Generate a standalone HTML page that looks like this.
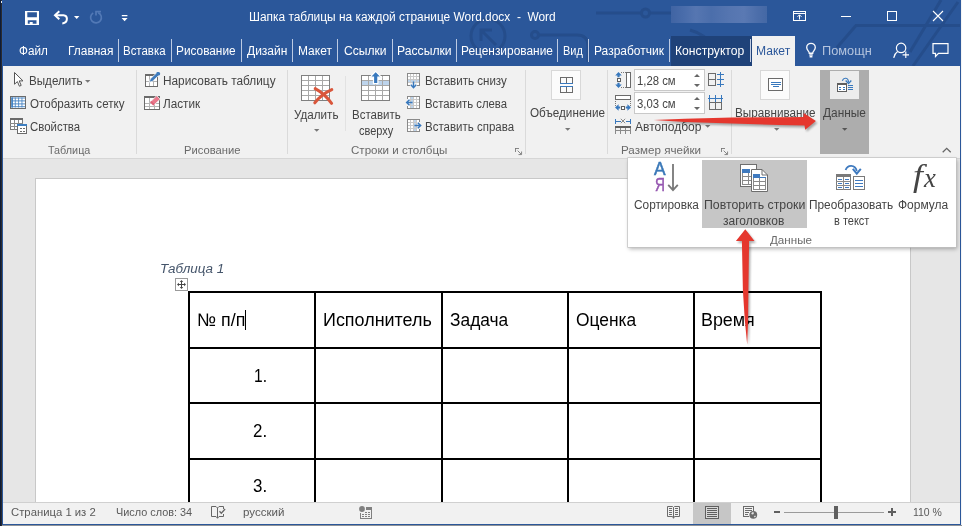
<!DOCTYPE html>
<html lang="ru"><head><meta charset="utf-8"><title>Word</title>
<style>
html,body{margin:0;padding:0}
body{width:962px;height:526px;position:relative;overflow:hidden;background:#2b579a;font-family:"Liberation Sans",sans-serif}
.a{position:absolute}
.t{position:absolute;white-space:pre;transform-origin:0 0;display:block}
svg{position:absolute;overflow:visible}
.sep{position:absolute;width:1px;background:#dadada}
.tsep{position:absolute;width:1px;background:#bccae3;top:39px;height:23px}
#texts{position:absolute;left:0;top:0;width:962px;height:526px;will-change:transform}

</style></head>
<body>
<!-- title / tab strip -->
<div class="a" style="left:0;top:0;width:962px;height:66px;background:#2b579a"></div>
<!-- decorative background pattern -->
<svg style="left:0;top:0" width="962" height="66" viewBox="0 0 962 66" fill="none" stroke="#254d8b" stroke-width="3">
<path d="M962 25.500H856L837 47.500"/><path d="M941 0L910 52"/><path d="M958 2L913 66"/>
<circle cx="488" cy="36" r="17"/><path d="M496 45L481 30M481 41V30H492"/>
<path d="M539 35H577Q588 35 588 46V62"/><circle cx="535" cy="35" r="3.500"/>
<path d="M596 13H641M650 13H672"/><circle cx="645.500" cy="13" r="4"/>
<path d="M690 30Q705 34 716 48T740 66"/>
</svg>
<!-- contextual tab darker bg -->
<div class="a" style="left:670.800px;top:36px;width:81.500px;height:30px;background:#1f4279"></div>
<!-- active tab -->
<div class="a" style="left:752.300px;top:36.300px;width:42.900px;height:30px;background:#f1f1f1"></div>
<!-- blurred user name -->
<div class="a" style="left:671px;top:6px;width:96px;height:17px;background:linear-gradient(90deg,#4064a3 0%,#4a6dab 14%,#5676b1 26%,#4b6eab 42%,#5575b0 60%,#5a79b3 76%,#4c6eaa 90%,#4468a5 100%);filter:blur(0.6px)"></div>
<!-- tab separators -->
<div class="tsep" style="left:118px"></div><div class="tsep" style="left:171px"></div>
<div class="tsep" style="left:241px"></div><div class="tsep" style="left:292px"></div>
<div class="tsep" style="left:337px"></div><div class="tsep" style="left:392px"></div>
<div class="tsep" style="left:456px"></div><div class="tsep" style="left:557px"></div>
<div class="tsep" style="left:588px"></div><div class="tsep" style="left:669px"></div>
<div class="tsep" style="left:750px;width:1.300px;background:#c3cee4"></div>

<!-- QAT icons -->
<svg style="left:25px;top:11px" width="14" height="14" viewBox="0 0 14 14"><path fill="#fff" fill-rule="evenodd" d="M0 0h14v14H0zM2.3 1.3v4.9h9.6V1.3zM2.8 9.3v3.4h1.9v-1.7h3v1.7h3.8V9.3z"/></svg>
<svg style="left:53px;top:10px" width="16" height="15" viewBox="0 0 16 15" fill="none" stroke="#fff" stroke-width="2"><path d="M6.3 1.3L2 5.2l4.3 4"/><path d="M2.5 5.2H10.5a3.6 3.6 0 0 1 3.4 3.6c0 2.6-2 4.3-4.6 4.6"/></svg>
<svg style="left:74px;top:16px" width="6" height="3" viewBox="0 0 6 3"><path fill="#fff" d="M0 0h5.4L2.7 3z"/></svg>
<svg style="left:88px;top:10px" width="16" height="15" viewBox="0 0 16 15" fill="none" stroke="#5279b6" stroke-width="1.7"><path d="M10.2 2.6a5.4 5.4 0 1 1-5 .3"/><path d="M8 5.6V1.6h5"/></svg>
<svg style="left:121px;top:14px" width="8" height="8" viewBox="0 0 8 8"><path fill="#fff" d="M0.8 1h5.6v1.2H0.8zM0.6 4h6L3.6 7.2z"/></svg>

<!-- window controls -->
<svg style="left:792px;top:10px" width="16" height="12" viewBox="0 0 16 12" fill="none" stroke="#fff" stroke-width="1"><rect x="1.5" y="1.5" width="12" height="9"/><path d="M1.5 3.5h12M7.5 9.5v-4.5M5.5 6.8l2-2 2 2"/></svg>
<div class="a" style="left:841px;top:16px;width:10px;height:1px;background:#fff"></div>
<div class="a" style="left:887px;top:11px;width:8px;height:8px;border:1px solid #fff"></div>
<svg style="left:932px;top:10px" width="12" height="12" viewBox="0 0 12 12" stroke="#fff" stroke-width="1.1"><path d="M1 1l10 10M11 1L1 11"/></svg>

<!-- help bulb / share / comments -->
<svg style="left:806px;top:43px" width="11" height="15" viewBox="0 0 11 15" fill="none" stroke="#f6f8fc" stroke-width="1.35"><path d="M3.3 10.2c0-2-2.6-2.8-2.6-5.6a4.3 4.3 0 0 1 8.600 0c0 2.800-2.600 3.600-2.600 5.600z"/><path d="M3.300 12h3.400M3.600 13.700h2.800"/></svg>
<svg style="left:893px;top:42px" width="17" height="17" viewBox="0 0 17 17" fill="none" stroke="#fff" stroke-width="1.2"><circle cx="8.1" cy="5.9" r="4.7"/><path d="M4.6 9.6C2.6 11 1.2 13.200 0.700 15.800"/><path d="M9.600 12.900h6.400M12.800 9.600v6.400" stroke-width="1.1"/></svg>
<svg style="left:932px;top:43px" width="17" height="15" viewBox="0 0 17 15" fill="none" stroke="#fff" stroke-width="1.200"><path d="M1 0.700h15v9.600H6.500L3.500 13.500V10.300H1z"/></svg>

<!-- ribbon -->
<div class="a" style="left:2px;top:66px;width:958px;height:92px;background:#f1f1f1"></div>
<div class="a" style="left:2px;top:158px;width:958px;height:1px;background:#d6d6d6"></div>
<!-- document area -->
<div class="a" style="left:2px;top:159px;width:958px;height:344px;background:#e6e6e6"></div>
<div class="a" style="left:35px;top:178px;width:876px;height:325px;background:#fff;border:1px solid #c8c8c8;border-bottom:none;box-sizing:border-box"></div>
<!-- status bar -->
<div class="a" style="left:2px;top:502px;width:958px;height:22px;background:#f1f1f1;border-top:1px solid #d0d0d0;box-sizing:border-box"></div>
<div class="a" style="left:693px;top:503px;width:38px;height:21px;background:#c6c6c6"></div>
<!-- window frame -->
<div class="a" style="left:0;top:0;width:1px;height:526px;background:#0c1b38"></div><div class="a" style="left:1px;top:0;width:1px;height:526px;background:#2a2b2e"></div><div class="a" style="left:2px;top:0;width:1px;height:66px;background:#2a5aa6"></div><div class="a" style="left:1px;top:1px;width:1px;height:2px;background:#e8e8e8"></div>
<div class="a" style="left:2px;top:66px;width:1px;height:458px;background:#2b579a"></div>
<div class="a" style="left:960px;top:0;width:1px;height:526px;background:#2b579a"></div>
<div class="a" style="left:961px;top:0;width:1px;height:526px;background:#f4f4f4"></div>
<div class="a" style="left:2px;top:524px;width:959px;height:1px;background:#2b579a"></div>
<div class="a" style="left:2px;top:525px;width:960px;height:1px;background:#8f9297"></div>

<!-- ribbon separators -->
<div class="sep" style="left:136px;top:70px;height:84px"></div>
<div class="sep" style="left:287px;top:70px;height:84px"></div>
<div class="sep" style="left:345px;top:76px;height:55px;background:#e2e2e2"></div>
<div class="sep" style="left:525px;top:70px;height:84px"></div>
<div class="sep" style="left:607px;top:70px;height:84px"></div>
<div class="sep" style="left:731px;top:70px;height:84px"></div>

<!-- Данные pressed button -->
<div class="a" style="left:819.700px;top:70px;width:49.600px;height:83.500px;background:#adadad"></div>
<div class="a" style="left:829.500px;top:70.700px;width:29.100px;height:28.800px;background:#ececec"></div>
<!-- big icon boxes -->
<div class="a" style="left:551.200px;top:70.200px;width:29.600px;height:29.600px;background:#fbfbfb;border:1px solid #d8d8d8;box-sizing:border-box"></div>
<div class="a" style="left:760.300px;top:70.200px;width:29.600px;height:29.600px;background:#fbfbfb;border:1px solid #d8d8d8;box-sizing:border-box"></div>
<!-- size inputs -->
<div class="a" style="left:634px;top:69px;width:71px;height:22px;background:#fff;border:1px solid #c9c9c9;box-sizing:border-box"></div>
<div class="a" style="left:634px;top:92px;width:71px;height:22px;background:#fff;border:1px solid #c9c9c9;box-sizing:border-box"></div>

<!-- dropdown panel -->
<div class="a" style="left:628px;top:158px;width:328px;height:88.500px;background:#fff;box-shadow:0 0 0 0.700px #c2c2c2,1px 2px 4px rgba(0,0,0,.3)"></div>
<div class="a" style="left:702px;top:159.500px;width:104.700px;height:68.200px;background:#c6c6c6"></div>

<!-- table -->
<div class="a" style="left:188px;top:291px;width:634px;height:2px;background:#000"></div>
<div class="a" style="left:188px;top:347px;width:634px;height:2px;background:#000"></div>
<div class="a" style="left:188px;top:402px;width:634px;height:2px;background:#000"></div>
<div class="a" style="left:188px;top:458px;width:634px;height:2px;background:#000"></div>
<div class="a" style="left:188px;top:291px;width:2px;height:211px;background:#000"></div>
<div class="a" style="left:314px;top:291px;width:2px;height:211px;background:#000"></div>
<div class="a" style="left:441px;top:291px;width:2px;height:211px;background:#000"></div>
<div class="a" style="left:567px;top:291px;width:2px;height:211px;background:#000"></div>
<div class="a" style="left:693px;top:291px;width:2px;height:211px;background:#000"></div>
<div class="a" style="left:820px;top:291px;width:2px;height:211px;background:#000"></div>
<!-- caret -->
<div class="a" style="left:245px;top:310px;width:1px;height:20px;background:#000"></div>
<!-- table move handle -->
<svg style="left:175px;top:278px" width="13" height="13" viewBox="0 0 13 13"><rect x="0.5" y="0.5" width="12" height="12" fill="#fff" stroke="#9a9a9a"/><path d="M6.500 3v7M3 6.500h7" stroke="#444" stroke-width="1" fill="none"/><path d="M6.500 2l1.700 1.900h-3.400zM6.500 11l1.700-1.900h-3.400zM2 6.500l1.900-1.700v3.400zM11 6.500l-1.900-1.700v3.400z" fill="#444"/></svg>

<!-- ===== ribbon icons ===== -->
<!-- select cursor -->
<svg style="left:13px;top:71px" width="12" height="17" viewBox="0 0 12 17"><path d="M1.500 1.500V13.200L4.400 10.600L6.400 15.200L8.200 14.400L6.200 9.900H10z" fill="#fff" stroke="#555" stroke-width="1" stroke-linejoin="miter"/></svg>
<!-- view gridlines -->
<svg style="left:10px;top:96px" width="16" height="13" viewBox="0 0 16 13"><rect x="0.500" y="0.500" width="15" height="12" fill="#fff" stroke="#6b6b6b" shape-rendering="crispEdges"/><path d="M2.100 1.500v10M5.300 1.500v10M8.600 1.500v10M11.950 1.500v10" stroke="#3f7fc1" fill="none" stroke-width="0.800"/><path d="M2.100 1.500v10" stroke="#3f7fc1" fill="none" stroke-width="1.600"/><path d="M1.500 2h13.500M1.500 4.900h13.500M1.500 7.900h13.500M1.500 10.700h13.500" stroke="#3f7fc1" fill="none" stroke-width="0.900"/></svg>
<!-- properties -->
<svg style="left:10px;top:118px" width="17" height="16" viewBox="0 0 17 16" shape-rendering="crispEdges"><rect x="0.500" y="0.500" width="12" height="11" fill="#fff" stroke="#7a7a7a"/><rect x="0" y="0" width="13" height="2" fill="#6b6b6b"/><path d="M0 5.500h13M0 8.500h13M4.500 2v10M8.500 2v10" stroke="#8a8a8a" fill="none"/><rect x="7.500" y="6.500" width="9" height="9" fill="#fff" stroke="#6b6b6b"/><rect x="7" y="6" width="10" height="2" fill="#3f7fc1"/><path d="M9.500 10h2M9.500 13h2M13 10h2M13 13h2" stroke="#6b6b6b" stroke-width="1" fill="none"/></svg>
<!-- draw table -->
<svg style="left:145px;top:72px" width="16" height="16" viewBox="0 0 16 16"><g shape-rendering="crispEdges"><rect x="0.500" y="2.500" width="12" height="12" fill="#fff" stroke="#6b6b6b"/><rect x="0" y="2" width="13" height="2" fill="#6b6b6b"/><path d="M4.500 4v10M8.500 4v10M1 9.500h11" stroke="#b4b4b4" fill="none"/></g><path d="M4.200 10.300l1.100-3.400l6.600-6.300l2.300 2.400l-6.600 6.200z" fill="#3d7abd" stroke="#f1f1f1" stroke-width="0.800"/><path d="M11.300 0.900a1.700 1.700 0 0 1 3 2.400z" fill="#3d7abd"/><circle cx="13.500" cy="1.700" r="1.700" fill="#3d7abd"/></svg>
<!-- eraser -->
<svg style="left:144px;top:95px" width="17" height="16" viewBox="0 0 17 16"><g shape-rendering="crispEdges"><rect x="0.500" y="1.500" width="15" height="13" fill="#fff" stroke="#6b6b6b"/><rect x="0" y="1" width="16" height="2" fill="#6b6b6b"/><path d="M5.500 3v11M10.500 3v11M1 8.500h14M1 11.500h14" stroke="#b4b4b4" fill="none"/></g><path d="M6 7.300L12.700 0.700L16.200 4.200L9.300 10.600z" fill="#e9798c" stroke="#f1f1f1" stroke-width="0.800"/><path d="M6 7.300L7.300 6L10.700 9.300L9.300 10.600z" fill="#dc6278"/></svg>
<!-- delete -->
<svg style="left:301px;top:75px" width="32" height="30" viewBox="0 0 32 30"><g shape-rendering="crispEdges"><rect x="0.500" y="0.500" width="28" height="25" fill="#fff" stroke="#808080"/><path d="M1 5.500h27M1 10.500h27M1 15.500h27M1 20.500h27M7.500 1v24M14.500 1v24M21.500 1v24" stroke="#a8a8a8" fill="none"/></g><path d="M14.200 13.600C20.500 17 26 22 30.600 28.300M30.800 14.600C24 17.500 18 22.500 13.800 27.800" stroke="#d9563b" stroke-width="3" fill="none" stroke-linecap="round"/></svg>
<!-- insert above -->
<svg style="left:361px;top:71px" width="30" height="31" viewBox="0 0 30 31"><g shape-rendering="crispEdges"><rect x="0.500" y="4.500" width="28" height="25" fill="#fff" stroke="#808080"/><rect x="1" y="10" width="27" height="4" fill="#bdd4ec"/><path d="M1 9.500h27M1 14.500h27M1 19.500h27M1 24.500h27M7.500 5v24M14.500 5v24M21.500 5v24" stroke="#a8a8a8" fill="none"/></g><path d="M14.700 0.300L20.300 6.200H16.900V12.600H12.500V6.200H9.100z" fill="#3878bd" stroke="#fff" stroke-width="1.200"/></svg>
<!-- insert below -->
<svg style="left:407px;top:73px" width="14" height="16" viewBox="0 0 14 16"><g shape-rendering="crispEdges"><rect x="0.500" y="0.500" width="12" height="12" fill="#fff" stroke="#8a8a8a"/><rect x="1" y="7" width="11" height="3" fill="#bdd4ec"/><path d="M1 3.500h11M1 6.500h11M1 9.500h11M3.500 1v11M6.500 1v11M9.500 1v11" stroke="#c9c9c9" fill="none"/><rect x="3" y="10" width="7" height="4" fill="#f1f1f1"/></g><path d="M6.500 8.500v6M3.800 11.800l2.700 2.900l2.700-2.900" stroke="#3878bd" stroke-width="1.400" fill="none"/></svg>
<!-- insert left -->
<svg style="left:405px;top:96px" width="16" height="13" viewBox="0 0 16 13"><g shape-rendering="crispEdges"><rect x="2.500" y="0.500" width="12" height="12" fill="#fff" stroke="#8a8a8a"/><rect x="5" y="1" width="3" height="11" fill="#bdd4ec"/><path d="M3 3.500h11M3 6.500h11M3 9.500h11M5.500 1v11M8.500 1v11M11.500 1v11" stroke="#c9c9c9" fill="none"/><rect x="1" y="3" width="4" height="7" fill="#f1f1f1"/></g><path d="M7.500 6.500h-6M4.500 3.800l-2.900 2.700l2.900 2.700" stroke="#3878bd" stroke-width="1.400" fill="none"/></svg>
<!-- insert right -->
<svg style="left:407px;top:119px" width="16" height="13" viewBox="0 0 16 13"><g shape-rendering="crispEdges"><rect x="0.500" y="0.500" width="12" height="12" fill="#fff" stroke="#8a8a8a"/><rect x="7" y="1" width="3" height="11" fill="#bdd4ec"/><path d="M1 3.500h11M1 6.500h11M1 9.500h11M3.500 1v11M6.500 1v11M9.500 1v11" stroke="#c9c9c9" fill="none"/><rect x="10" y="3" width="4" height="7" fill="#f1f1f1"/></g><path d="M7.500 6.500h6M10.800 3.800l2.900 2.700l-2.900 2.700" stroke="#3878bd" stroke-width="1.400" fill="none"/></svg>
<!-- dialog launchers -->
<svg style="left:514.500px;top:147.500px" width="7" height="7" viewBox="0 0 8 8" fill="none" stroke="#777" stroke-width="1" shape-rendering="crispEdges"><path d="M0.500 5V0.500H5"/><path d="M3 3l4 4M7.500 4v3.500H4" shape-rendering="auto"/></svg>
<svg style="left:720.500px;top:147.500px" width="7" height="7" viewBox="0 0 8 8" fill="none" stroke="#777" stroke-width="1" shape-rendering="crispEdges"><path d="M0.500 5V0.500H5"/><path d="M3 3l4 4M7.500 4v3.500H4" shape-rendering="auto"/></svg>
<!-- merge icon -->
<svg style="left:560px;top:77px" width="14" height="17" viewBox="0 0 14 17" shape-rendering="crispEdges" fill="none"><path d="M0.500 6V0.500H12.500V6M6.500 0.500V6" stroke="#6b6b6b"/><path d="M0 6.500h13M0 9.500h13" stroke="#3878bd"/><path d="M0.500 10V15.500H12.500V10M6.500 10V15.500" stroke="#6b6b6b"/></svg>
<!-- row height icon -->
<svg style="left:615px;top:72px" width="16" height="16" viewBox="0 0 16 16"><path d="M3.500 0L6.800 3.600H4.600V5.200H2.400V3.600H0.200zM3.500 16L6.800 12.400H4.600V10.800H2.400V12.400H0.200z" fill="#3878bd"/><rect x="2" y="6.500" width="3" height="3" fill="#fff" stroke="#5f5f5f" shape-rendering="crispEdges"/><path d="M6 0.500h5M6 15.500h5" stroke="#777" stroke-dasharray="1 1" shape-rendering="crispEdges"/><rect x="11.500" y="0.500" width="4" height="15" fill="#fff" stroke="#6b6b6b" shape-rendering="crispEdges"/></svg>
<!-- col width icon -->
<svg style="left:615px;top:95px" width="16" height="16" viewBox="0 0 16 16"><rect x="0.500" y="0.500" width="15" height="4" fill="#fff" stroke="#6b6b6b" shape-rendering="crispEdges"/><path d="M0.500 6v5M15.500 6v5" stroke="#777" stroke-dasharray="1 1" shape-rendering="crispEdges"/><path d="M0 12.500L3.600 9.200V11.400H5.200V13.600H3.600V15.800zM16 12.500L12.400 9.200V11.400H10.800V13.600H12.400V15.800z" fill="#3878bd"/><rect x="6.500" y="11" width="3" height="3" fill="#fff" stroke="#5f5f5f" shape-rendering="crispEdges"/></svg>
<!-- autofit icon -->
<svg style="left:615px;top:118px" width="16" height="16" viewBox="0 0 16 16"><path d="M0.500 0.500v5M15.500 0.500v5M0.500 3h5M10.500 3h5" stroke="#3878bd" shape-rendering="crispEdges" fill="none"/><path d="M5.800 0.800l4.400 4.400M10.200 0.800l-4.400 4.400" stroke="#8a8a8a" stroke-width="1"/><g shape-rendering="crispEdges"><rect x="0" y="8" width="16" height="2" fill="#5f5f5f"/><path d="M0.500 10v6M5.500 10v6M10.500 10v6M15.500 10v6M0 12.500h16" stroke="#8a8a8a" fill="none"/></g></svg>
<!-- spinners -->
<svg style="left:694px;top:74px" width="6" height="13" viewBox="0 0 6 13" fill="#666"><path d="M0 3L3 0L6 3zM0 10L3 13L6 10z"/></svg>
<svg style="left:694px;top:97px" width="6" height="13" viewBox="0 0 6 13" fill="#666"><path d="M0 3L3 0L6 3zM0 10L3 13L6 10z"/></svg>
<!-- distribute rows -->
<svg style="left:708px;top:72px" width="17" height="15" viewBox="0 0 17 15" shape-rendering="crispEdges" fill="none"><path d="M0.500 1.500h7v12h-7zM0.500 7.500h7" stroke="#6b6b6b"/><path d="M12.500 0v15M9 2.500h7M9 7.500h7M9 12.500h7" stroke="#3878bd"/></svg>
<!-- distribute cols -->
<svg style="left:708px;top:95px" width="16" height="15" viewBox="0 0 16 15" shape-rendering="crispEdges" fill="none"><path d="M0 3.500h15M1.500 0v7M7.500 0v7M13.500 0v7" stroke="#3878bd"/><path d="M1.500 7.500h12v7h-12zM7.500 7.500v7" stroke="#6b6b6b"/></svg>
<!-- align icon -->
<svg style="left:768px;top:78px" width="16" height="13" viewBox="0 0 16 13" shape-rendering="crispEdges" fill="none"><rect x="0.500" y="0.500" width="14" height="12" stroke="#6b6b6b" fill="#fff"/><path d="M3 4.500h10M3 6.500h10M5 8.500h6" stroke="#3878bd"/></svg>
<!-- data icon -->
<svg style="left:837px;top:77px" width="16" height="16" viewBox="0 0 16 16"><g shape-rendering="crispEdges"><rect x="0.500" y="6.500" width="9" height="8" fill="#fff" stroke="#5f5f5f"/><rect x="0" y="6" width="10" height="2" fill="#5f5f5f"/><path d="M2 10h2M6 10h2M2 12.500h2M6 12.500h2" stroke="#3878bd" fill="none"/><path d="M10.500 8.500h5M10.500 10.500h5M10.500 12.500h5" stroke="#3878bd" fill="none"/></g><path d="M5.300 3.700C6.600 0.300 11.500 0 11.500 5.600" stroke="#3878bd" stroke-width="1.200" fill="none"/><path d="M8.700 3.500L11.500 6.600L14.300 3.500" stroke="#3878bd" stroke-width="1.300" fill="none"/></svg>
<!-- small drop arrows -->
<svg style="left:85px;top:80px" width="6" height="3" viewBox="0 0 6 3"><path fill="#777" d="M0 0h5.400L2.700 2.800z"/></svg>
<svg style="left:314px;top:129px" width="6" height="3" viewBox="0 0 6 3"><path fill="#777" d="M0 0h5.400L2.700 2.800z"/></svg>
<svg style="left:565px;top:127.500px" width="6" height="3" viewBox="0 0 6 3"><path fill="#777" d="M0 0h5.400L2.700 2.800z"/></svg>
<svg style="left:704.500px;top:125px" width="6" height="3" viewBox="0 0 6 3"><path fill="#777" d="M0 0h5.400L2.700 2.800z"/></svg>
<svg style="left:773.500px;top:127.500px" width="6" height="3" viewBox="0 0 6 3"><path fill="#777" d="M0 0h5.400L2.700 2.800z"/></svg>
<svg style="left:841.500px;top:127.500px" width="6" height="3" viewBox="0 0 6 3"><path fill="#555" d="M0 0h5.400L2.700 2.800z"/></svg>
<!-- collapse ribbon caret -->
<svg style="left:942px;top:147px" width="10" height="6" viewBox="0 0 10 6"><path d="M0.700 5.300L4.700 1.300L8.700 5.300" stroke="#666" stroke-width="1.300" fill="none"/></svg>

<!-- ===== dropdown icons ===== -->
<!-- sort arrow -->
<svg style="left:667px;top:164px" width="12" height="28" viewBox="0 0 12 28"><path d="M6 0V26M1.200 20.800L6 26.200L10.800 20.800" stroke="#787878" stroke-width="1.800" fill="none"/></svg>
<!-- repeat header rows -->
<svg style="left:740px;top:164px" width="29" height="28" viewBox="0 0 29 28"><g shape-rendering="crispEdges"><rect x="0.500" y="0.500" width="16" height="22" fill="#fff" stroke="#6e6e6e"/><rect x="2" y="5" width="8" height="4" fill="#3f7abf"/><path d="M2.500 9v11.500H11M2 12.500h9M2 16.500h9M8.500 9v11" stroke="#8a8a8a" fill="none"/></g><path d="M11.500 5.500H22L27.500 11V27.500H11.500z" fill="#fff" stroke="#6e6e6e"/><path d="M22 5.500V11H27.500" fill="none" stroke="#6e6e6e"/><g shape-rendering="crispEdges"><rect x="13" y="10" width="7" height="4" fill="#3f7abf"/><path d="M13 13.500h13" stroke="#3f7abf" fill="none"/><path d="M13.500 14v11.500h12V14M13 17.500h13M13 21.500h13M19.500 14v11" stroke="#8a8a8a" fill="none"/></g></svg>
<!-- convert to text -->
<svg style="left:836px;top:164px" width="30" height="27" viewBox="0 0 30 27"><g shape-rendering="crispEdges"><rect x="0.500" y="10.500" width="14" height="15" fill="#fff" stroke="#7a7a7a"/><rect x="0" y="10" width="15" height="3" fill="#7a7a7a"/><path d="M0 17.500h15M0 21.500h15M7.500 13v13" stroke="#8a8a8a" fill="none"/><path d="M2 15.500h4M9 15.500h4M2 19.500h4M9 19.500h4M2 23.500h4M9 23.500h4" stroke="#3f7abf" fill="none"/><rect x="17.500" y="12.500" width="11" height="13" fill="#fff" stroke="#7a7a7a"/><path d="M19 16.500h8M19 19.500h8M19 22.500h8" stroke="#3f7abf" fill="none"/></g><path d="M9.600 6C11.500 0.500 19 0 20.800 7" stroke="#3f7abf" stroke-width="1.800" fill="none"/><path d="M16.800 4.800L20.800 9.600L24.800 4.800" stroke="#3f7abf" stroke-width="2" fill="none"/></svg>

<!-- ===== status bar icons ===== -->
<svg style="left:211px;top:506px" width="15" height="13" viewBox="0 0 15 13" fill="none" stroke="#666" stroke-width="1"><path d="M6.500 2L5 0.500H0.500V10.500H5L6.500 12.300L8 10.500H12.500V8M12.500 3V0.500H8L6.500 2V12"/><path d="M8.500 5.300l1.800 1.900l3.800-4.200" stroke-width="1.300"/></svg>
<svg style="left:359px;top:506px" width="14" height="13" viewBox="0 0 14 13"><circle cx="3" cy="3" r="2.900" fill="#808080"/><g shape-rendering="crispEdges"><path d="M1.500 7v5.500h11V1.500" stroke="#808080" fill="none"/><rect x="7" y="1" width="6" height="3" fill="#808080"/><path d="M6 6.500h2M9 6.500h2M3 8.500h2M6 8.500h2M9 8.500h2M3 10.500h2M6 10.500h2M9 10.500h2" stroke="#808080" fill="none"/></g></svg>
<!-- read mode -->
<svg style="left:667px;top:506px" width="14" height="13" viewBox="0 0 14 13" fill="none" stroke="#6b6b6b" stroke-width="1"><path d="M6.500 1.500L5.500 0.500H0.500V10.500H5.500L6.500 12.300L7.500 10.500H12.500V0.500H7.500L6.500 1.500V12"/><path d="M2 2.500h3M2 4.500h3M2 6.500h3M2 8.500h3M8 2.500h3M8 4.500h3M8 6.500h3M8 8.500h3" shape-rendering="crispEdges"/></svg>
<!-- print layout -->
<svg style="left:705px;top:506px" width="14" height="13" viewBox="0 0 14 13" shape-rendering="crispEdges" fill="none" stroke="#5f5f5f"><rect x="0.500" y="0.500" width="13" height="12" fill="#d8d8d8"/><path d="M2 2.500h10M2 4.500h10M2 6.500h10M2 8.500h10M2 10.500h10"/></svg>
<!-- web layout -->
<svg style="left:743px;top:506px" width="15" height="14" viewBox="0 0 15 14"><g shape-rendering="crispEdges" fill="none" stroke="#6b6b6b"><path d="M6 10.500H0.500V0.500H10.500V5"/><path d="M2 2.500h7M2 4.500h7M2 6.500h4M2 8.500h3"/></g><circle cx="10.300" cy="8.800" r="3.900" fill="#6b6b6b"/><path d="M8.200 7.200l1.600-1.200l1.200 0.800l-0.600 1.400l-1.400 0.400zM10.800 10.200l1.400-0.700l0.700 0.900l-1.100 1.100z" fill="#e4e4e4"/></svg>
<!-- zoom slider -->
<div class="a" style="left:774px;top:511px;width:6px;height:2px;background:#5f5f5f"></div>
<div class="a" style="left:784px;top:512px;width:100px;height:1px;background:#9a9a9a"></div>
<div class="a" style="left:834px;top:506px;width:4px;height:13px;background:#5f5f5f"></div>
<div class="a" style="left:888px;top:511px;width:8px;height:2px;background:#5f5f5f"></div>
<div class="a" style="left:891px;top:508px;width:2px;height:8px;background:#5f5f5f"></div>

<div id="texts">
<span class="t" style="left:248.55px;top:10.95px;font-size:12.5px;line-height:12.5px;color:#fff;transform:scaleX(0.9529);">Шапка таблицы на каждой странице Word.docx  -  Word</span>
<span class="t" style="left:19.00px;top:44.55px;font-size:12.5px;line-height:12.5px;color:#fff;transform:scaleX(0.9363);">Файл</span>
<span class="t" style="left:68.35px;top:44.55px;font-size:12.5px;line-height:12.5px;color:#fff;transform:scaleX(0.9540);">Главная</span>
<span class="t" style="left:123.38px;top:44.55px;font-size:12.5px;line-height:12.5px;color:#fff;transform:scaleX(0.9163);">Вставка</span>
<span class="t" style="left:176.35px;top:44.55px;font-size:12.5px;line-height:12.5px;color:#fff;transform:scaleX(0.9468);">Рисование</span>
<span class="t" style="left:246.50px;top:44.55px;font-size:12.5px;line-height:12.5px;color:#fff;transform:scaleX(0.9617);">Дизайн</span>
<span class="t" style="left:297.84px;top:44.55px;font-size:12.5px;line-height:12.5px;color:#fff;transform:scaleX(0.9581);">Макет</span>
<span class="t" style="left:343.70px;top:44.55px;font-size:12.5px;line-height:12.5px;color:#fff;transform:scaleX(0.9654);">Ссылки</span>
<span class="t" style="left:396.53px;top:44.55px;font-size:12.5px;line-height:12.5px;color:#fff;transform:scaleX(0.9742);">Рассылки</span>
<span class="t" style="left:460.55px;top:44.55px;font-size:12.5px;line-height:12.5px;color:#fff;transform:scaleX(0.9522);">Рецензирование</span>
<span class="t" style="left:562.82px;top:44.55px;font-size:12.5px;line-height:12.5px;color:#fff;transform:scaleX(0.8781);">Вид</span>
<span class="t" style="left:594.04px;top:44.55px;font-size:12.5px;line-height:12.5px;color:#fff;transform:scaleX(0.9596);">Разработчик</span>
<span class="t" style="left:675.23px;top:44.55px;font-size:12.5px;line-height:12.5px;color:#fff;transform:scaleX(0.9727);">Конструктор</span>
<span class="t" style="left:755.53px;top:44.55px;font-size:12.5px;line-height:12.5px;color:#2b579a;transform:scaleX(0.9668);">Макет</span>
<span class="t" style="left:822.48px;top:44.55px;font-size:12.5px;line-height:12.5px;color:#b4c4de;transform:scaleX(1.0216);">Помощн</span>
<span class="t" style="left:28.87px;top:74.95px;font-size:12.5px;line-height:12.5px;color:#444;transform:scaleX(0.9296);">Выделить</span>
<span class="t" style="left:29.80px;top:98.05px;font-size:12.5px;line-height:12.5px;color:#444;transform:scaleX(0.9267);">Отобразить сетку</span>
<span class="t" style="left:29.80px;top:120.95px;font-size:12.5px;line-height:12.5px;color:#444;transform:scaleX(0.9138);">Свойства</span>
<span class="t" style="left:47.50px;top:144.65px;font-size:11.3px;line-height:11.3px;color:#6a6a6a;transform:scaleX(0.9553);">Таблица</span>
<span class="t" style="left:162.55px;top:74.95px;font-size:12.5px;line-height:12.5px;color:#444;transform:scaleX(0.9460);">Нарисовать таблицу</span>
<span class="t" style="left:163.30px;top:98.05px;font-size:12.5px;line-height:12.5px;color:#444;transform:scaleX(0.9399);">Ластик</span>
<span class="t" style="left:183.70px;top:144.65px;font-size:11.3px;line-height:11.3px;color:#6a6a6a;transform:scaleX(0.9945);">Рисование</span>
<span class="t" style="left:293.60px;top:109.25px;font-size:12.5px;line-height:12.5px;color:#444;transform:scaleX(0.9320);">Удалить</span>
<span class="t" style="left:351.78px;top:109.25px;font-size:12.5px;line-height:12.5px;color:#444;transform:scaleX(0.9189);">Вставить</span>
<span class="t" style="left:358.80px;top:125.05px;font-size:12.5px;line-height:12.5px;color:#444;transform:scaleX(0.8802);">сверху</span>
<span class="t" style="left:424.87px;top:74.95px;font-size:12.5px;line-height:12.5px;color:#444;transform:scaleX(0.9253);">Вставить снизу</span>
<span class="t" style="left:424.89px;top:98.05px;font-size:12.5px;line-height:12.5px;color:#444;transform:scaleX(0.9077);">Вставить слева</span>
<span class="t" style="left:424.88px;top:120.95px;font-size:12.5px;line-height:12.5px;color:#444;transform:scaleX(0.9199);">Вставить справа</span>
<span class="t" style="left:350.80px;top:144.65px;font-size:11.3px;line-height:11.3px;color:#6a6a6a;transform:scaleX(1.0234);">Строки и столбцы</span>
<span class="t" style="left:529.50px;top:106.95px;font-size:12.5px;line-height:12.5px;color:#444;transform:scaleX(0.9378);">Объединение</span>
<span class="t" style="left:636.90px;top:74.95px;font-size:12.5px;line-height:12.5px;color:#444;transform:scaleX(0.9060);">1,28 см</span>
<span class="t" style="left:636.90px;top:97.75px;font-size:12.5px;line-height:12.5px;color:#444;transform:scaleX(0.9060);">3,03 см</span>
<span class="t" style="left:634.50px;top:120.95px;font-size:12.5px;line-height:12.5px;color:#444;transform:scaleX(0.9625);">Автоподбор</span>
<span class="t" style="left:621.30px;top:144.65px;font-size:11.3px;line-height:11.3px;color:#6a6a6a;transform:scaleX(1.0283);">Размер ячейки</span>
<span class="t" style="left:734.86px;top:106.95px;font-size:12.5px;line-height:12.5px;color:#444;transform:scaleX(0.9367);">Выравнивание</span>
<span class="t" style="left:823.00px;top:106.95px;font-size:12.5px;line-height:12.5px;color:#444;transform:scaleX(0.9512);">Данные</span>
<span class="t" style="left:633.50px;top:198.55px;font-size:12.5px;line-height:12.5px;color:#444;transform:scaleX(0.9468);">Сортировка</span>
<span class="t" style="left:703.72px;top:198.55px;font-size:12.5px;line-height:12.5px;color:#444;transform:scaleX(0.9850);">Повторить строки</span>
<span class="t" style="left:723.00px;top:214.55px;font-size:12.5px;line-height:12.5px;color:#444;transform:scaleX(0.9590);">заголовков</span>
<span class="t" style="left:808.75px;top:198.55px;font-size:12.5px;line-height:12.5px;color:#444;transform:scaleX(0.9483);">Преобразовать</span>
<span class="t" style="left:833.80px;top:214.55px;font-size:12.5px;line-height:12.5px;color:#444;transform:scaleX(0.8788);">в текст</span>
<span class="t" style="left:898.30px;top:198.55px;font-size:12.5px;line-height:12.5px;color:#444;transform:scaleX(0.9597);">Формула</span>
<span class="t" style="left:770.30px;top:235.05px;font-size:11.3px;line-height:11.3px;color:#6a6a6a;transform:scaleX(1.0289);">Данные</span>
<span class="t" style="left:11.30px;top:507.20px;font-size:11.4px;line-height:11.4px;color:#5a5a5a;transform:scaleX(0.9925);">Страница 1 из 2</span>
<span class="t" style="left:116.00px;top:507.20px;font-size:11.4px;line-height:11.4px;color:#5a5a5a;transform:scaleX(0.9541);">Число слов: 34</span>
<span class="t" style="left:243.30px;top:507.20px;font-size:11.4px;line-height:11.4px;color:#5a5a5a;transform:scaleX(1.0145);">русский</span>
<span class="t" style="left:912.80px;top:507.20px;font-size:11.4px;line-height:11.4px;color:#5a5a5a;transform:scaleX(0.9194);">110 %</span>
<span class="t" style="left:160.32px;top:261.85px;font-size:13.7px;line-height:13.7px;color:#44546a;transform:scaleX(0.9828);font-style:italic;">Таблица 1</span>
<span class="t" style="left:197.02px;top:310.55px;font-size:18.3px;line-height:18.3px;color:#000;transform:scaleX(0.9755);">№ п/п</span>
<span class="t" style="left:323.02px;top:310.55px;font-size:18.3px;line-height:18.3px;color:#000;transform:scaleX(0.9816);">Исполнитель</span>
<span class="t" style="left:450.00px;top:310.55px;font-size:18.3px;line-height:18.3px;color:#000;transform:scaleX(0.9491);">Задача</span>
<span class="t" style="left:576.20px;top:310.55px;font-size:18.3px;line-height:18.3px;color:#000;transform:scaleX(0.9509);">Оценка</span>
<span class="t" style="left:701.42px;top:310.55px;font-size:18.3px;line-height:18.3px;color:#000;transform:scaleX(0.9775);">Время</span>
<span class="t" style="left:253.85px;top:366.65px;font-size:18.3px;line-height:18.3px;color:#000;transform:scaleX(0.8506);">1.</span>
<span class="t" style="left:252.80px;top:421.75px;font-size:18.3px;line-height:18.3px;color:#000;transform:scaleX(0.9247);">2.</span>
<span class="t" style="left:252.80px;top:477.25px;font-size:18.3px;line-height:18.3px;color:#000;transform:scaleX(0.9247);">3.</span>
<span class="t" style="left:654.00px;top:161.45px;font-size:17.5px;line-height:17.5px;color:#3a78b8;transform:scaleX(0.9917);-webkit-text-stroke:0.5px #3a78b8;">А</span>
<span class="t" style="left:654.80px;top:176.55px;font-size:17.5px;line-height:17.5px;color:#9557b0;transform:scaleX(0.7833);-webkit-text-stroke:0.5px #9557b0;">Я</span>
<span class="t" style="left:913.00px;top:159.60px;font-size:31px;line-height:31px;color:#444;transform:scaleX(1.1538);font-style:italic;font-family:'Liberation Serif', serif;">f</span>
<span class="t" style="left:923.82px;top:165.55px;font-size:26.3px;line-height:26.3px;color:#444;transform:scaleX(1.0154);font-style:italic;font-family:'Liberation Serif', serif;">x</span>
</div>
<!-- red annotation arrows -->
<svg style="left:0;top:0" width="962" height="526" viewBox="0 0 962 526">
<g opacity="0.32" transform="translate(1.5,2)" fill="#000" style="filter:blur(0.8px)"><path d="M653.600 120L685 118.700L732 117.600L779 117.200L803.500 116.900L803.600 113L815.900 121.100L805.200 129.700L804.500 125.600L779 125L732 123.400L685 121.900z"/><path d="M745.300 229.300L754.500 240.900H749.100L748.400 290L748.100 320L747.200 344.600L744.800 320L742.900 290L741.900 240.900H735.900z"/></g>
<path d="M653.600 120L685 118.700L732 117.600L779 117.200L803.500 116.900L803.600 113L815.900 121.100L805.200 129.700L804.500 125.600L779 125L732 123.400L685 121.900z" fill="#e5372e"/>
<path d="M745.300 229.300L754.500 240.900H749.100L748.400 290L748.100 320L747.200 344.600L744.800 320L742.900 290L741.900 240.900H735.900z" fill="#e5372e"/>
</svg>

</body></html>
